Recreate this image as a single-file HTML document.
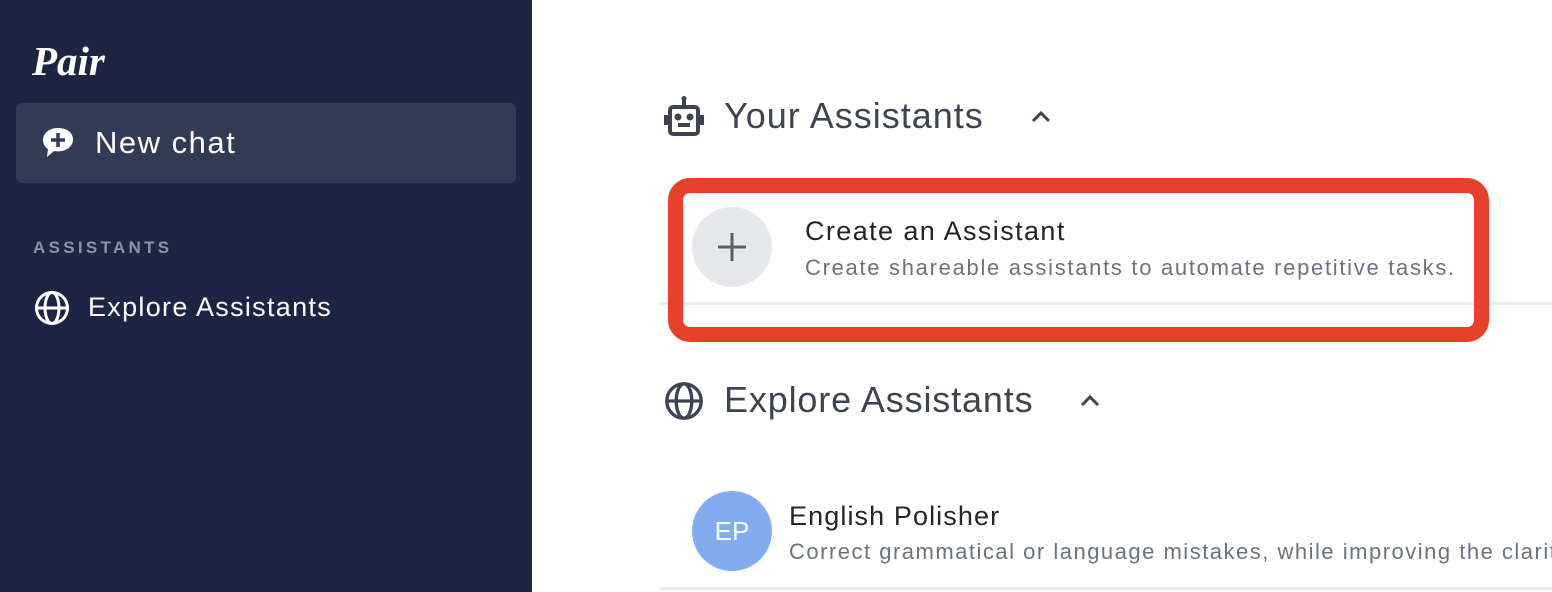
<!DOCTYPE html>
<html><head><style>
*{margin:0;padding:0;box-sizing:border-box}
body{width:1552px;height:592px;overflow:hidden;background:#fff;font-family:"Liberation Sans",sans-serif;position:relative}
.sb{position:absolute;left:0;top:0;width:532px;height:592px;background:#1e2543}
.logo{position:absolute;left:32px;top:37px;font-family:"Liberation Serif",serif;font-style:italic;font-weight:bold;font-size:41px;color:#fff;letter-spacing:0px}
.nc{position:absolute;left:16px;top:103px;width:500px;height:80px;background:#323b55;border-radius:6px}
.nc span{position:absolute;left:79px;top:22px;color:#fff;font-size:31px;letter-spacing:1.5px}
.lab{position:absolute;left:33px;top:238px;color:#8d93a3;font-size:17px;font-weight:bold;letter-spacing:3.3px}
.ex{position:absolute;left:88px;top:292px;color:#fff;font-size:27px;letter-spacing:1.3px}
.t{position:absolute;color:#3f4350;font-size:36px}
.abs{position:absolute}
</style></head><body>
<div class="sb">
<div class="logo">Pair</div>
<div class="nc">
<svg class="abs" style="left:24px;top:22px" width="36" height="36" viewBox="0 0 36 36"><path d="M18 3C9 3 3 8.5 3 15c0 4 2 7 5 9l-1 8 7-6c1 .3 2.5.4 4 .4 9 0 15-5.5 15-12S27 3 18 3z" fill="#fff"/><path d="M18 8v14M11 15h14" stroke="#323b55" stroke-width="3.5"/></svg>
<span>New chat</span></div>
<div class="lab">ASSISTANTS</div>
<svg class="abs" style="left:34px;top:290px" width="36" height="36" viewBox="0 0 36 36" fill="none" stroke="#fff" stroke-width="3"><circle cx="18" cy="18" r="15.5"/><ellipse cx="18" cy="18" rx="7" ry="15.5"/><path d="M2.5 18h31"/></svg>
<div class="ex">Explore Assistants</div>
</div>

<svg class="abs" style="left:664px;top:95px" width="40" height="42" viewBox="0 0 40 42" fill="none" stroke="#3f4350" stroke-width="4"><circle cx="20" cy="3.5" r="2.5" fill="#3f4350" stroke="none"/><path d="M20 5v6"/><rect x="6" y="12" width="28" height="27" rx="3"/><path d="M2 20v10M38 20v10" /><circle cx="14" cy="22" r="1.5" fill="#3f4350"/><circle cx="26" cy="22" r="1.5" fill="#3f4350"/><path d="M14 30h12"/></svg>
<div class="t" style="left:724px;top:95px;letter-spacing:1px">Your Assistants</div>
<svg class="abs" style="left:1030px;top:108px" width="22" height="16" viewBox="0 0 22 16" fill="none" stroke="#3f4350" stroke-width="3"><path d="M3 13l8-8 8 8"/></svg>

<div class="abs" style="left:660px;top:302px;width:892px;height:3px;background:#ebebeb"></div>
<div class="abs" style="left:668px;top:178px;width:821px;height:164px;border:15px solid #e8412a;border-radius:22px"></div>
<div class="abs" style="left:692px;top:207px;width:80px;height:80px;border-radius:50%;background:#e6e7eb"></div>
<svg class="abs" style="left:716px;top:231px" width="32" height="32" viewBox="0 0 32 32" stroke="#5a5f6b" stroke-width="3"><path d="M16 2v28M2 16h28"/></svg>
<div class="abs" style="left:805px;top:216px;font-size:27px;color:#23252c;letter-spacing:1.4px">Create an Assistant</div>
<div class="abs" style="left:805px;top:255px;font-size:22px;color:#6b7180;letter-spacing:1.7px;white-space:nowrap">Create shareable assistants to automate repetitive tasks.</div>

<svg class="abs" style="left:664px;top:381px" width="40" height="40" viewBox="0 0 36 36" fill="none" stroke="#3f4350" stroke-width="3"><circle cx="18" cy="18" r="15.5"/><ellipse cx="18" cy="18" rx="7" ry="15.5"/><path d="M2.5 18h31"/></svg>
<div class="t" style="left:724px;top:379px;letter-spacing:0.85px">Explore Assistants</div>
<svg class="abs" style="left:1079px;top:392px" width="22" height="16" viewBox="0 0 22 16" fill="none" stroke="#3f4350" stroke-width="3"><path d="M3 13l8-8 8 8"/></svg>

<div class="abs" style="left:692px;top:491px;width:80px;height:80px;border-radius:50%;background:#82acf0;color:#fff;font-size:26px;text-align:center;line-height:80px">EP</div>
<div class="abs" style="left:789px;top:501px;font-size:27px;color:#23252c;letter-spacing:1.1px">English Polisher</div>
<div class="abs" style="left:789px;top:539px;font-size:22px;color:#6b7180;white-space:nowrap;letter-spacing:1.5px">Correct grammatical or language mistakes, while improving the clarity</div>
<div class="abs" style="left:660px;top:587px;width:892px;height:3px;background:#ebebeb"></div>
</body></html>
